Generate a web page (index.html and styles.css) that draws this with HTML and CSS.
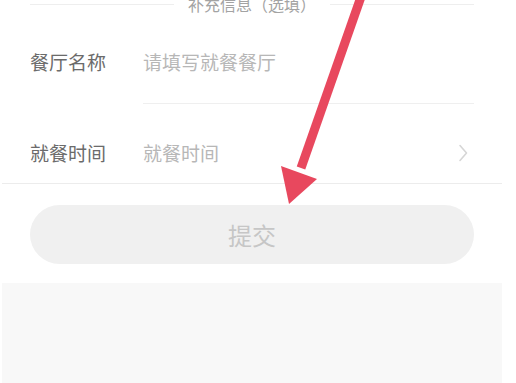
FILE: index.html
```html
<!DOCTYPE html>
<html lang="zh">
<head>
<meta charset="utf-8">
<title>补充信息</title>
<link rel="stylesheet" href="styles.css">
</head>
<body>
<div class="page">
  <div class="section-title">
    <span class="title-line"></span>
    <span class="title-text">补充信息（选填）</span>
    <span class="title-line"></span>
  </div>
  <div class="row row-first">
    <div class="label">餐厅名称</div>
    <div class="field field-first">请填写就餐餐厅</div>
  </div>
  <div class="row row-second">
    <div class="label">就餐时间</div>
    <div class="field field-second">
      <span>就餐时间</span>
      <svg class="chevron" width="10" height="18" viewBox="0 0 10 18"><polyline points="2,1.5 8.5,9 2,16.5" fill="none" stroke="#d6d6d6" stroke-width="1.6" stroke-linecap="round" stroke-linejoin="round"/></svg>
    </div>
  </div>
  <div class="submit-wrap">
    <button class="submit">提交</button>
  </div>
  <div class="footer-area"></div>
</div>
<svg class="annotation" width="516" height="383" viewBox="0 0 516 383">
  <line x1="362" y1="-6" x2="301" y2="168" stroke="#e8485e" stroke-width="9"/>
  <polygon points="281,166 317,179 289,204" fill="#e8485e"/>
</svg>
</body>
</html>
```
FILE: styles.css
```css
html, body {
  margin: 0;
  padding: 0;
  background: #ffffff;
  overflow: hidden;
}
body {
  width: 516px;
  height: 383px;
  position: relative;
  font-family: "Noto Sans CJK SC", "Noto Sans", sans-serif;
}
.page {
  width: 500px;
  margin-left: 2px;
}
.section-title {
  display: flex;
  align-items: center;
  height: 16px;
  margin-top: -4px;
  padding: 0 28px;
}
.title-line {
  flex: 1;
  height: 1px;
  background: #eeeeee;
}
.title-text {
  margin: 0 14px;
  font-size: 16px;
  line-height: 16px;
  color: #a3a3a3;
  white-space: nowrap;
}
.row {
  display: flex;
  align-items: flex-start;
  padding: 0 28px;
  font-size: 19px;
  line-height: 28px;
}
.label {
  width: 113px;
  flex: none;
  color: #6b6b6b;
}
.field {
  flex: 1;
  color: #b7b7b7;
}
.row-first {
  padding-top: 36px;
}
.field-first {
  padding-bottom: 27px;
  border-bottom: 1px solid #efefef;
}
.row-second {
  padding-top: 35px;
  padding-bottom: 16px;
  border-bottom: 1px solid #ececec;
}
.field-second {
  display: flex;
  align-items: center;
  justify-content: space-between;
}
.chevron {
  margin-right: 6px;
}
.submit-wrap {
  padding: 21px 28px 0;
}
.submit {
  display: block;
  width: 100%;
  height: 59px;
  border: none;
  border-radius: 30px;
  background: #f0f0f0;
  color: #c6c6c6;
  font-family: "Noto Sans CJK SC", "Noto Sans", sans-serif;
  font-size: 24px;
  line-height: 59px;
  padding: 0;
}
.footer-area {
  margin-top: 19px;
  height: 110px;
  background: #f8f8f8;
}
.annotation {
  position: absolute;
  left: 0;
  top: 0;
  pointer-events: none;
}
```
